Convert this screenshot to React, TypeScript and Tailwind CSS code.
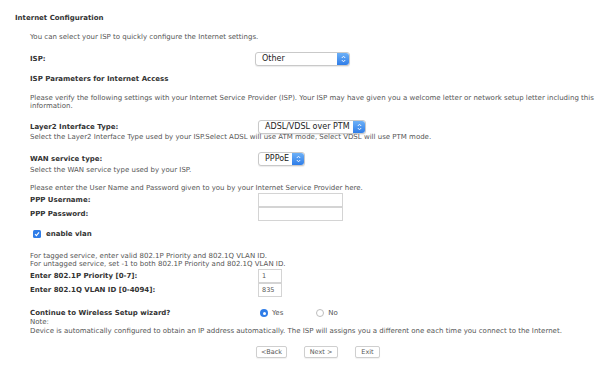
import React from 'react';

const font = { fontFamily: '"DejaVu Sans", Verdana, sans-serif' };

function Arrows({ w = 12 }: { w?: number }) {
  return (
    <div
      className="flex h-full items-center justify-center rounded-r-[3px] bg-gradient-to-b from-[#6cb0f7] to-[#2f7de8]"
      style={{ width: w }}
    >
      <svg width="5" height="8" viewBox="0 0 5 8">
        <path d="M0.8 3 L2.5 1.2 L4.2 3 M0.8 5 L2.5 6.8 L4.2 5" stroke="#fff" strokeWidth="0.9" fill="none" />
      </svg>
    </div>
  );
}

function Select({ value, width }: { value: string; width: number }) {
  return (
    <div
      className="flex h-[14px] items-center rounded-[3px] border border-[#c9c9c9] bg-white shadow-[0_1px_1px_rgba(0,0,0,0.08)]"
      style={{ width }}
    >
      <span className="flex-1 whitespace-nowrap pl-[6px] text-[8px] text-[#222]">{value}</span>
      <Arrows />
    </div>
  );
}

function Input({ width, value }: { width: number; value?: string }) {
  return (
    <div
      className="flex h-[14px] items-center border border-[#d4d4d4] bg-white pl-[3px] text-[6.5px] text-[#555]"
      style={{ width }}
    >
      {value}
    </div>
  );
}

function Row({ label, children, h = 14 }: { label: string; children?: React.ReactNode; h?: number }) {
  return (
    <div className="flex items-center" style={{ height: h }}>
      <div className="w-[228px] whitespace-nowrap font-bold text-[#333]">{label}</div>
      {children}
    </div>
  );
}

function Btn({ label, w }: { label: string; w: number }) {
  return (
    <div
      className="flex h-[12px] items-center justify-center rounded-[2px] border border-[#cfcfcf] bg-white text-[6.5px] text-[#555] shadow-[0_1px_1px_rgba(0,0,0,0.06)]"
      style={{ width: w }}
    >
      {label}
    </div>
  );
}

export default function App() {
  return (
    <div className="h-[368px] w-[600px] overflow-hidden bg-white text-[7px] leading-[8px] text-[#555]" style={font}>
      <div className="pl-[15px] pt-[14px] font-bold text-[#333]">Internet Configuration</div>

      <div className="pl-[30px]">
        <div className="mt-[11px]">You can select your ISP to quickly configure the Internet settings.</div>

        <div className="mt-[10px]">
          <Row label="ISP:" h={16}>
            <div className="-ml-[3px]">
              <Select value="Other" width={95} />
            </div>
          </Row>
        </div>

        <div className="mt-[8px] font-bold text-[#333]">ISP Parameters for Internet Access</div>

        <div className="mt-[11px]">
          Please verify the following settings with your Internet Service Provider (ISP). Your ISP may have given you a welcome letter or network setup letter including this information.
        </div>

        <div className="mt-[11px]">
          <Row label="Layer2 Interface Type:" h={12}>
            <Select value="ADSL/VDSL over PTM" width={108} />
          </Row>
          <div>Select the Layer2 Interface Type used by your ISP.Select ADSL will use ATM mode, Select VDSL will use PTM mode.</div>
        </div>

        <div className="mt-[12px]">
          <Row label="WAN service type:" h={12}>
            <Select value="PPPoE" width={47} />
          </Row>
          <div className="mt-[1px]">Select the WAN service type used by your ISP.</div>
        </div>

        <div className="mt-[10px]">Please enter the User Name and Password given to you by your Internet Service Provider here.</div>
        <div className="mt-[1px]">
          <Row label="PPP Username:" h={14}>
            <Input width={85} />
          </Row>
          <Row label="PPP Password:" h={14}>
            <Input width={85} />
          </Row>
        </div>

        <div className="mt-[9px] flex items-center gap-[5px] pl-[3px]">
          <div className="flex h-[8px] w-[8px] items-center justify-center rounded-[1.5px] bg-[#2f7de8]">
            <svg width="6" height="6" viewBox="0 0 6 6">
              <path d="M1 3.2 L2.4 4.6 L5 1.4" stroke="#fff" strokeWidth="1.1" fill="none" />
            </svg>
          </div>
          <span className="font-bold text-[#333]">enable vlan</span>
        </div>

        <div className="mt-[14px]">For tagged service, enter valid 802.1P Priority and 802.1Q VLAN ID.</div>
        <div>For untagged service, set -1 to both 802.1P Priority and 802.1Q VLAN ID.</div>
        <div className="mt-[1px]">
          <Row label="Enter 802.1P Priority [0-7]:" h={14}>
            <Input width={24} value="1" />
          </Row>
          <Row label="Enter 802.1Q VLAN ID [0-4094]:" h={14}>
            <Input width={24} value="835" />
          </Row>
        </div>

        <div className="mt-[11px]">
          <Row label="Continue to Wireless Setup wizard?" h={10}>
            <div className="ml-[2px] flex items-center">
              <div className="flex h-[8px] w-[8px] items-center justify-center rounded-full bg-[#2f7de8]">
                <div className="h-[3px] w-[3px] rounded-full bg-white" />
              </div>
              <span className="ml-[4px]">Yes</span>
              <div className="ml-[33px] h-[8px] w-[8px] rounded-full border border-[#bdbdbd] bg-white" />
              <span className="ml-[4px]">No</span>
            </div>
          </Row>
          <div className="leading-[9px]">Note:</div>
          <div className="leading-[9px]">Device is automatically configured to obtain an IP address automatically. The ISP will assigns you a different one each time you connect to the Internet.</div>
        </div>

        <div className="mt-[10px] flex gap-[17px] pl-[226px]">
          <Btn label="<Back" w={31} />
          <Btn label="Next >" w={34} />
          <Btn label="Exit" w={25} />
        </div>
      </div>
    </div>
  );
}
